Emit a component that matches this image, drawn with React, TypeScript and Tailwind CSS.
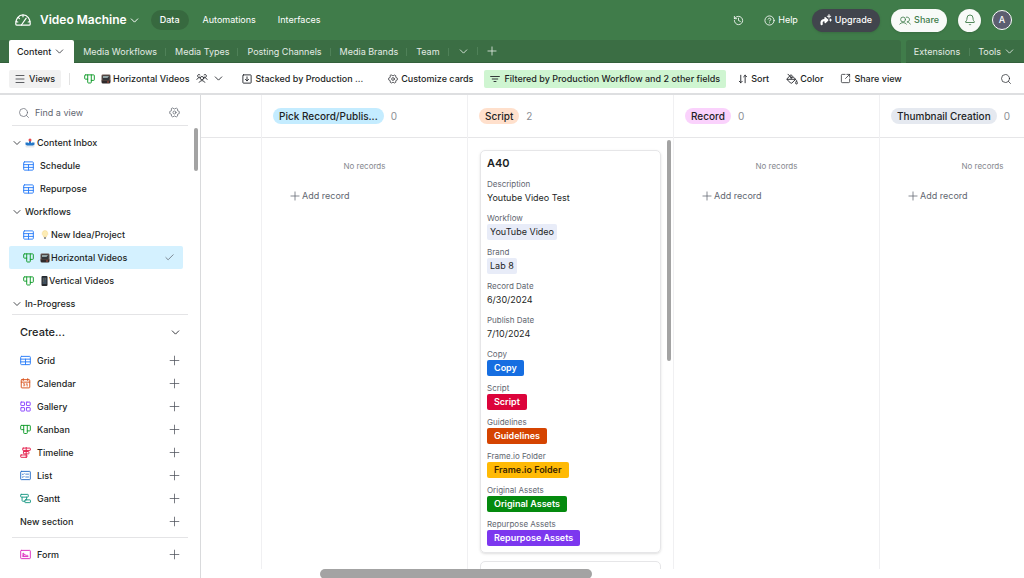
import type { ReactNode } from "react";

import {
  Bell,
  Check,
  ChevronDown,
  CircleHelp,
  History,
  Menu,
  Plus,
  Search,
  SquareArrowOutUpRight,
} from "lucide-react";

type IconProps = {
  className?: string;
};

function Svg({
  className = "",
  box = "0 0 16 16",
  children,
}: IconProps & { box?: string; children: ReactNode }) {
  return (
    <svg
      viewBox={box}
      fill="none"
      stroke="currentColor"
      strokeWidth="1.4"
      strokeLinecap="round"
      strokeLinejoin="round"
      className={`shrink-0 ${className}`}
      aria-hidden="true"
    >
      {children}
    </svg>
  );
}

function GaugeIcon({ className }: IconProps) {
  return (
    <Svg className={className} box="0 0 16 12">
      <path
        d="M2 11.2a1.2 1.2 0 0 1-1.2-1.1C.5 5 3.6.9 8 .9s7.500 4.100 7.200 9.200a1.200 1.200 0 0 1-1.200 1.100Z"
        strokeWidth="1.2"
      />
      <path d="M6.400 11 11.200 4.200M8 1v1.800M1 7.600l1.800.4M3.200 3.400l1.200 1.200M15 7.600l-1.800.4" strokeWidth="1.2" />
    </Svg>
  );
}

function GridIcon({ className }: IconProps) {
  return (
    <Svg className={className} box="0 0 16 14">
      <rect x="1" y="1" width="14" height="12" rx="1.2" />
      <path d="M1 5h14M1 9h14M8 5v8" />
    </Svg>
  );
}

function KanbanIcon({ className }: IconProps) {
  return (
    <Svg className={className} box="0 0 16 14">
      <path d="M2 1h12a1 1 0 0 1 1 1v6a1 1 0 0 1-1 1h-3.400M2 1a1 1 0 0 0-1 1v4.200a1 1 0 0 0 1 1h3.400" />
      <path d="M5.400 1v10.800a1 1 0 0 0 1 1h3.200a1 1 0 0 0 1-1V1" />
    </Svg>
  );
}

function CalendarIcon({ className }: IconProps) {
  return (
    <Svg className={className}>
      <rect x="1.8" y="2.4" width="12.4" height="12" rx="1" />
      <path d="M1.800 6h12.400M4.800 1v2.600M11.200 1v2.600" />
      <path d="M5 8.400h1.800L6 9.800c1.600 0 1.400 2.200-.8 1.600M9 9l1.400-.8v3.600" strokeWidth="1.2" />
    </Svg>
  );
}

function GalleryIcon({ className }: IconProps) {
  return (
    <Svg className={className}>
      <rect x="1.2" y="1.6" width="5.4" height="5" rx=".6" />
      <rect x="9.4" y="1.6" width="5.4" height="5" rx=".6" />
      <rect x="1.2" y="9.6" width="5.4" height="5" rx=".6" />
      <rect x="9.4" y="9.6" width="5.4" height="5" rx=".6" />
    </Svg>
  );
}

function TimelineIcon({ className }: IconProps) {
  return (
    <Svg className={className}>
      <rect x="4" y="1.6" width="11" height="3.4" rx=".6" />
      <rect x="5" y="6.6" width="8" height="3.4" rx=".6" />
      <rect x="1" y="11.6" width="9" height="3.4" rx=".6" />
      <path d="M9 .2v15.600" />
    </Svg>
  );
}

function ListIcon({ className }: IconProps) {
  return (
    <Svg className={className} box="0 0 16 14">
      <rect x="1" y="1" width="14" height="12" rx="1" />
      <path d="m3.400 5 .9.9L6 4.200M3.400 9l.9.9L6 8.200M8.400 5h4M8.400 9.200h4" strokeWidth="1.2" />
    </Svg>
  );
}

function GanttIcon({ className }: IconProps) {
  return (
    <Svg className={className} box="0 0 16 14">
      <rect x="1" y="1" width="11" height="4" rx=".8" />
      <rect x="7" y="9" width="8.2" height="4" rx=".8" />
      <path d="M3 5v5a1 1 0 0 0 1 1h3M9.600 5v4" />
    </Svg>
  );
}

function FormIcon({ className }: IconProps) {
  return (
    <Svg className={className} box="0 0 16 14">
      <rect x="1" y="1" width="14" height="12" rx="1" />
      <path d="M4.400 9.800V4.800c1.800 0 1.600 3.400.2 4 1-2 2.400-2.400 2.600-.4.8-1 1.600-.8 1.800.2.6-.6 1.200-.6 2.400-.2M4.400 10h7.200" />
    </Svg>
  );
}

function GearIcon({ className }: IconProps) {
  return (
    <Svg className={className}>
      <circle cx="8" cy="8" r="2.2" strokeWidth="1.1" />
      <path
        d="M5.400 1.600 8 2.900l2.600-1.300 1.900 1.200-.1 2.500 2.500 1.200v3l-2.500 1.200.1 2.500-1.900 1.200L8 13.100l-2.600 1.300-1.900-1.200.1-2.500-2.500-1.200v-3l2.500-1.200-.1-2.500Z"
        strokeWidth="1.1"
      />
    </Svg>
  );
}

function PeopleIcon({ className }: IconProps) {
  return (
    <Svg className={className} box="0 0 18 14">
      <circle cx="9" cy="6.4" r="2.6" strokeWidth="1.3" />
      <path d="M4.600 13a4.900 4.900 0 0 1 8.800 0" strokeWidth="1.3" />
      <path
        d="M5.200 5A2.200 2.200 0 1 1 5.800 1.400M12.800 5a2.200 2.200 0 1 0-.6-3.600M1 8.400C1.800 6.600 3.200 5.600 5 5.800M17 8.400c-.8-1.800-2.200-2.800-4-2.600"
        strokeWidth="1.3"
      />
    </Svg>
  );
}

function ShareIcon({ className }: IconProps) {
  return (
    <Svg className={className} box="0 0 18 14">
      <circle cx="6" cy="5.4" r="3.8" strokeWidth="1.3" />
      <path d="M.8 12.600a6.400 6.400 0 0 1 10.400 0M11 1.800a3.800 3.800 0 1 1 1 7.400c2.200 0 4 1.200 5.200 3.400" strokeWidth="1.3" />
    </Svg>
  );
}

function StackedIcon({ className }: IconProps) {
  return (
    <Svg className={className}>
      <rect x="1.4" y="1.4" width="13.2" height="13.2" rx="1" />
      <path d="M8 4.600v6.200M5.400 8.600 8 11l2.600-2.400" />
    </Svg>
  );
}

function FilterIcon({ className }: IconProps) {
  return (
    <Svg className={className} box="0 0 16 12">
      <path d="M1 2h14M3.600 6h8.800M6.400 10h3.200" />
    </Svg>
  );
}

function SortIcon({ className }: IconProps) {
  return (
    <Svg className={className}>
      <path d="M4.400 2v12M2 11.600 4.400 14l2.400-2.400M11.400 14V2M9 4.400 11.400 2l2.400 2.400" />
    </Svg>
  );
}

function BucketIcon({ className }: IconProps) {
  return (
    <Svg className={className}>
      <path d="m2.600 1.600 3.600 3.600M7 2.600l5.800 5.800-5 5a1.200 1.200 0 0 1-1.700 0L1.700 9a1.200 1.200 0 0 1 0-1.600ZM1.600 8.400h11" strokeWidth="1.2" />
      <circle cx="7" cy="6.2" r="1" strokeWidth="1.2" />
      <path d="M14 10.600c-.8 1.400-1.200 2-1.200 2.800a1.200 1.200 0 0 0 2.400 0c0-.8-.4-1.400-1.200-2.800Z" strokeWidth="1.2" />
    </Svg>
  );
}

function SparkIcon({ className }: IconProps) {
  return (
    <Svg className={className}>
      <path d="M2.200 13.400c-.6-3.400.8-5 3.200-5.200h3" strokeWidth="3" />
      <path d="m6.800 5 3.400 3.200L7 11.200Z" fill="currentColor" strokeWidth="2" />
      <path d="M12 .8v4.400M9.800 3h4.400M14 6.800v2.400M12.800 8h2.400" strokeWidth="1.4" />
    </Svg>
  );
}

function TvEmoji() {
  return (
    <svg viewBox="0 0 20 20" className="size-[10px] shrink-0" aria-hidden="true">
      <rect x="1" y="1" width="18" height="14" rx="2.5" fill="#6b544d" />
      <rect x="3" y="3" width="14" height="9" rx="2" fill="#33383c" />
      <path d="M4 4h12l-3 4H4Z" fill="#94a5a6" />
      <path d="M1 13h18v3a3 3 0 0 1-3 3H4a3 3 0 0 1-3-3Z" fill="#2f2a2b" />
      <path d="M12 16h4" stroke="#b8533e" strokeWidth="2" />
    </svg>
  );
}

function InboxEmoji() {
  return (
    <svg viewBox="0 0 20 20" className="size-[10px] shrink-0" aria-hidden="true">
      <path d="M1 11h18v6a2 2 0 0 1-2 2H3a2 2 0 0 1-2-2Z" fill="#e6eaee" />
      <path d="M1 9h5l4 3 4-3h5v4l-3 2H4l-3-2Z" fill="#2478c9" />
      <path d="M10 12V6" stroke="#2478c9" strokeWidth="4" />
      <circle cx="10" cy="4" r="3" fill="#e5484d" />
    </svg>
  );
}

function BulbEmoji() {
  return (
    <svg viewBox="0 0 20 20" className="size-[10px] shrink-0" aria-hidden="true">
      <path d="M10 1a6 6 0 0 0-3 11v2h6v-2a6 6 0 0 0-3-11Z" fill="#fdecb4" stroke="#f3d68e" />
      <path d="M8 17h4M8 15h4" stroke="#9a9a9a" strokeWidth="2" />
    </svg>
  );
}

function PhoneEmoji() {
  return (
    <svg viewBox="0 0 16 20" className="h-[10px] w-2 shrink-0" aria-hidden="true">
      <rect x="3" y="0" width="12" height="20" rx="2" fill="#25272c" />
      <rect x="5" y="3" width="8" height="13" fill="#40505e" />
      <path d="M6 5h2v2H6ZM10 5h2v2h-2ZM6 9h2v2H6Z" fill="#7d6a55" />
    </svg>
  );
}

const tables = [
  "Media Workflows",
  "Media Types",
  "Posting Channels",
  "Media Brands",
  "Team",
];

const sections = [
  {
    name: "Content Inbox",
    emoji: <InboxEmoji />,
    views: [
      { name: "Schedule", type: "grid" },
      { name: "Repurpose", type: "grid" },
    ],
  },
  {
    name: "Workflows",
    views: [
      { name: "New Idea/Project", type: "grid", emoji: <BulbEmoji /> },
      { name: "Horizontal Videos", type: "kanban", emoji: <TvEmoji />, active: true },
      { name: "Vertical Videos", type: "kanban", emoji: <PhoneEmoji /> },
    ],
  },
  {
    name: "In-Progress",
    views: [],
  },
] as {
  name: string;
  emoji?: ReactNode;
  views: { name: string; type: string; emoji?: ReactNode; active?: boolean }[];
}[];

const creators = [
  { name: "Grid", icon: GridIcon, color: "text-[#2d7ff9]" },
  { name: "Calendar", icon: CalendarIcon, color: "text-[#d9541e]" },
  { name: "Gallery", icon: GalleryIcon, color: "text-[#8b46ff]" },
  { name: "Kanban", icon: KanbanIcon, color: "text-[#119c2b]" },
  { name: "Timeline", icon: TimelineIcon, color: "text-[#e5214f]" },
  { name: "List", icon: ListIcon, color: "text-[#2a6fc9]" },
  { name: "Gantt", icon: GanttIcon, color: "text-[#1d9a85]" },
];

const fields = [
  { label: "Description", value: "Youtube Video Test", kind: "text" },
  { label: "Workflow", value: "YouTube Video", kind: "link" },
  { label: "Brand", value: "Lab 8", kind: "link" },
  { label: "Record Date", value: "6/30/2024", kind: "text" },
  { label: "Publish Date", value: "7/10/2024", kind: "text" },
  { label: "Copy", value: "Copy", color: "bg-[#166ee1] text-white" },
  { label: "Script", value: "Script", color: "bg-[#dc043b] text-white" },
  { label: "Guidelines", value: "Guidelines", color: "bg-[#d54401] text-white" },
  { label: "Frame.io Folder", value: "Frame.io Folder", color: "bg-[#ffba05] text-[#3b2501]" },
  { label: "Original Assets", value: "Original Assets", color: "bg-[#048a0e] text-white" },
  { label: "Repurpose Assets", value: "Repurpose Assets", color: "bg-[#7c37ef] text-white" },
];

const stacks = [
  { name: "Pick Record/Publis...", count: 0, color: "bg-[#c4ecff]" },
  { name: "Script", count: 2, color: "bg-[#ffe0cc]" },
  { name: "Record", count: 0, color: "bg-[#fad2fc]" },
  { name: "Thumbnail Creation", count: 0, color: "bg-[#e5e9f0]" },
];

function Header() {
  return (
    <header className="flex h-10 shrink-0 items-center bg-[#407c4a] pr-3 pl-[15px] text-[9px] text-white">
      <GaugeIcon className="h-3 w-4" />
      <button className="ml-[9px] flex items-center gap-px text-[12px] font-semibold">
        Video Machine
        <ChevronDown size={13} strokeWidth={1.8} />
      </button>

      <nav className="ml-[10px] flex items-center">
        <a href="#data" className="flex h-5 items-center rounded-full bg-[#37693f] px-[9px] font-medium">
          Data
        </a>
        <a href="#automations" className="ml-[14px]">
          Automations
        </a>
        <a href="#interfaces" className="ml-[22px]">
          Interfaces
        </a>
      </nav>

      <div className="ml-auto flex items-center">
        <button aria-label="History">
          <History size={11} strokeWidth={1.8} />
        </button>
        <button className="ml-5 flex items-center gap-[3px]">
          <CircleHelp size={11} strokeWidth={1.8} />
          Help
        </button>
        <button className="ml-[14px] flex h-[23px] items-center gap-[3px] rounded-full bg-[#41454d] px-2 font-medium shadow-sm">
          <SparkIcon className="size-3" />
          Upgrade
        </button>
        <button className="ml-[11px] flex h-[23px] items-center gap-[3px] rounded-full bg-[#f8faf8] px-2 font-medium text-[#407c4a] shadow-sm">
          <ShareIcon className="h-[9px] w-3" />
          Share
        </button>
        <button
          aria-label="Notifications"
          className="ml-[11px] flex size-[23px] items-center justify-center rounded-full bg-[#f8faf8] text-[#407c4a] shadow-sm"
        >
          <Bell size={12} strokeWidth={1.8} />
        </button>
        <button className="ml-[11px] flex size-5 items-center justify-center rounded-full border border-white bg-[#5c5e70] font-medium">
          A
        </button>
      </div>
    </header>
  );
}

function TableTabs() {
  return (
    <div className="flex h-[23px] shrink-0 gap-[5px] bg-[#407c4a] text-[9px] text-[#e4ece5]">
      <div className="flex flex-1 items-center rounded-tr-[3px] border-b border-[#33603b] bg-[#3b6e44] pl-[9px]">
        <button className="flex h-[23px] items-center gap-[2px] rounded-t-[2px] bg-white pr-2 pl-2 pt-px font-medium text-[#1d1f25]">
          Content
          <ChevronDown size={13} strokeWidth={1.4} />
        </button>
        {tables.map((table) => (
          <a
            key={table}
            href={`#${table}`}
            className="relative px-[9px] pt-px after:absolute after:top-1 after:right-0 after:h-2 after:w-px after:bg-[#4f8158]"
          >
            {table}
          </a>
        ))}
        <button
          aria-label="All tables"
          className="relative flex h-4 w-[29px] items-center justify-center after:absolute after:top-1 after:right-0 after:h-2 after:w-px after:bg-[#4f8158]"
        >
          <ChevronDown size={13} strokeWidth={1.6} />
        </button>
        <button aria-label="Add table" className="flex w-[29px] justify-center">
          <Plus size={14} strokeWidth={1.4} />
        </button>
      </div>

      <div className="flex items-center rounded-tl-[3px] border-b border-[#33603b] bg-[#3b6e44] pt-px pr-2 pl-2">
        <a href="#extensions">Extensions</a>
        <span className="mr-2 ml-[9px] h-2 w-px bg-[#4f8158]" />
        <button className="flex items-center gap-[2px]">
          Tools
          <ChevronDown size={13} strokeWidth={1.6} />
        </button>
      </div>
    </div>
  );
}

function ViewBar() {
  return (
    <div className="flex h-8 shrink-0 items-center border-b-2 border-[#dedfe1] pt-px pr-3 pl-[9px] text-[9px] font-medium">
      <button className="flex h-[18px] items-center gap-[3px] rounded-[2px] bg-[#f1f1f1] pr-[6px] pl-[5px]">
        <Menu size={12} strokeWidth={1.4} />
        Views
      </button>
      <span className="mr-[14px] ml-2 h-3 w-px bg-[#e2e2e2]" />

      <button className="flex items-center">
        <KanbanIcon className="h-[10px] w-[11px] text-[#119c2b]" />
        <span className="mr-[2px] ml-[6px]">
          <TvEmoji />
        </span>
        Horizontal Videos
        <PeopleIcon className="ml-[6px] h-[9px] w-3" />
        <ChevronDown size={13} strokeWidth={1.6} className="ml-1" />
      </button>
      <button className="ml-[17px] flex items-center gap-1">
        <StackedIcon className="size-[10px]" />
        Stacked by Production ...
      </button>
      <button className="ml-[25px] flex items-center gap-[3px]">
        <GearIcon className="size-[10px]" />
        Customize cards
      </button>
      <button className="ml-[11px] flex h-[18px] items-center gap-1 rounded-[2px] bg-[#cff5d1] px-[6px]">
        <FilterIcon className="h-2 w-[10px]" />
        Filtered by Production Workflow and 2 other fields
      </button>
      <button className="ml-3 flex items-center gap-[3px]">
        <SortIcon className="size-[10px]" />
        Sort
      </button>
      <button className="ml-[17px] flex items-center gap-[2px]">
        <BucketIcon className="size-3" />
        Color
      </button>
      <button className="ml-[17px] flex items-center gap-[3px]">
        <SquareArrowOutUpRight size={11} strokeWidth={1.6} />
        Share view
      </button>
      <button aria-label="Search records" className="ml-auto">
        <Search size={12} strokeWidth={1.4} />
      </button>
    </div>
  );
}

function Sidebar() {
  return (
    <aside className="relative flex w-[201px] shrink-0 flex-col border-r border-[#d9dadc] pr-3 pl-[9px] text-[9px] font-medium">
      <div className="ml-[3px] flex h-[31px] items-center border-b border-[#e4e4e6] pt-[5px] pr-2 pl-[6px]">
        <Search size={12} strokeWidth={1.4} className="text-[#616670]" />
        <input
          aria-label="Find a view"
          placeholder="Find a view"
          className="ml-[5px] min-w-0 flex-1 font-normal outline-none placeholder:text-[#616670]"
        />
        <button aria-label="View settings">
          <GearIcon className="size-[11px] text-[#616670]" />
        </button>
      </div>

      <div className="mt-[5px]">
        {sections.map((section) => (
          <div key={section.name}>
            <button className="flex h-[23px] items-center gap-[2px] pl-[2px]">
              <ChevronDown size={12} strokeWidth={1.6} />
              {section.emoji}
              {section.name}
            </button>

            {section.views.map((view) => (
              <a
                key={view.name}
                href={`#${view.name}`}
                className={`flex h-[23px] items-center rounded-[2px] pr-2 pl-[14px] ${
                  view.active ? "mr-[5px] bg-[#d4f1ff]" : ""
                }`}
              >
                {view.type === "grid" ? (
                  <GridIcon className="h-[10px] w-[11px] text-[#2d7ff9]" />
                ) : (
                  <KanbanIcon className="h-[10px] w-[11px] text-[#119c2b]" />
                )}
                <span className="ml-[6px] flex items-center gap-px">
                  {view.emoji}
                  {view.name}
                </span>
                {view.active && (
                  <Check size={11} strokeWidth={1.4} className="ml-auto text-[#4c5059]" />
                )}
              </a>
            ))}
          </div>
        ))}
      </div>

      <div className="mt-[-1px] ml-[3px] border-t border-[#e4e4e6] pt-[5px] pr-[6px] pl-2">
        <button className="flex h-6 w-full items-center justify-between text-[11px]">
          Create...
          <ChevronDown size={13} strokeWidth={1.6} />
        </button>

        <div className="mt-[5px]">
          {creators.map((item) => (
            <button key={item.name} className="flex h-[23px] w-full items-center">
              <item.icon className={`size-[11px] ${item.color}`} />
              <span className="ml-[6px]">{item.name}</span>
              <Plus size={15} strokeWidth={1.2} className="ml-auto text-[#4c5059]" />
            </button>
          ))}
          <button className="flex h-[23px] w-full items-center justify-between">
            New section
            <Plus size={15} strokeWidth={1.2} className="text-[#4c5059]" />
          </button>
        </div>
      </div>

      <div className="mt-1 ml-[3px] border-t border-[#e4e4e6] pt-[5px] pr-[6px] pl-2">
        <button className="flex h-[23px] w-full items-center">
          <FormIcon className="size-[11px] text-[#dd2fc0]" />
          <span className="ml-[6px]">Form</span>
          <Plus size={15} strokeWidth={1.2} className="ml-auto text-[#4c5059]" />
        </button>
      </div>

      <div className="absolute top-[33px] right-[2px] h-[43px] w-1 rounded-full bg-[#a3a3a3]" />
    </aside>
  );
}

function RecordCard() {
  return (
    <article className="rounded-[5px] border border-[#e6e6e8] px-[6px] pt-1 shadow-sm">
      <h3 className="mb-[7px] text-[11px] leading-4 font-semibold">A40</h3>

      {fields.map((field) => (
        <div key={field.label} className="h-[34px]">
          <p className="text-[8px] leading-3 text-[#616670]">{field.label}</p>

          {field.kind === "text" && (
            <p className="text-[9px] leading-4">{field.value}</p>
          )}
          {field.kind === "link" && (
            <span className="block w-fit rounded-[2px] bg-[#e8ecf8] px-[3px] text-[9px] leading-4">
              {field.value}
            </span>
          )}
          {field.color && (
            <button
              className={`block rounded-[2px] px-[7px] text-[9px] leading-4 font-semibold ${field.color}`}
            >
              {field.value}
            </button>
          )}
        </div>
      ))}
    </article>
  );
}

function Board() {
  return (
    <main className="flex min-w-0 flex-1 flex-col overflow-hidden">
      <div className="flex min-h-0 flex-1">
        <section className="w-[61px] shrink-0 border-r border-[#f0f0f2]">
          <div className="h-[43px] border-b border-[#e6e6e8]" />
        </section>

        {stacks.map((stack) => (
          <section
            key={stack.name}
            className="relative flex w-[206px] shrink-0 flex-col border-r border-[#f0f0f2]"
          >
            <div className="flex h-[43px] shrink-0 items-center gap-[7px] border-b border-[#e6e6e8] pl-[11px]">
              <h2 className={`rounded-full px-[6px] text-[10px] leading-4 font-medium ${stack.color}`}>
                {stack.name}
              </h2>
              <span className="text-[10px] text-[#8b8e94]">{stack.count}</span>
            </div>

            {stack.count > 0 ? (
              <div className="flex min-h-0 flex-1 flex-col gap-2 overflow-hidden px-3 pt-3">
                <RecordCard />
                <article className="h-10 shrink-0 rounded-[5px] border border-[#e6e6e8]" />
              </div>
            ) : (
              <div className="text-[#616670]">
                <p className="mt-[22px] text-center text-[8px] leading-3 text-[#85888e]">
                  No records
                </p>
                <button className="mt-4 ml-[26px] flex items-center text-[9px] leading-4">
                  <Plus size={14} strokeWidth={1.3} />
                  Add record
                </button>
              </div>
            )}

            {stack.count > 0 && (
              <div className="absolute top-[45px] right-[2px] h-[221px] w-1 rounded-full bg-[#a3a3a3]" />
            )}
          </section>
        ))}
      </div>

      <div className="h-[9px] shrink-0 pl-[119px]">
        <div className="h-[10px] w-[272px] rounded-full bg-[#a3a3a3]" />
      </div>
    </main>
  );
}

export default function App() {
  return (
    <div className="flex h-screen flex-col overflow-hidden bg-white font-['Inter',sans-serif] leading-normal text-[#1d1f25]">
      <Header />
      <TableTabs />
      <ViewBar />

      <div className="flex min-h-0 flex-1">
        <Sidebar />
        <Board />
      </div>
    </div>
  );
}
